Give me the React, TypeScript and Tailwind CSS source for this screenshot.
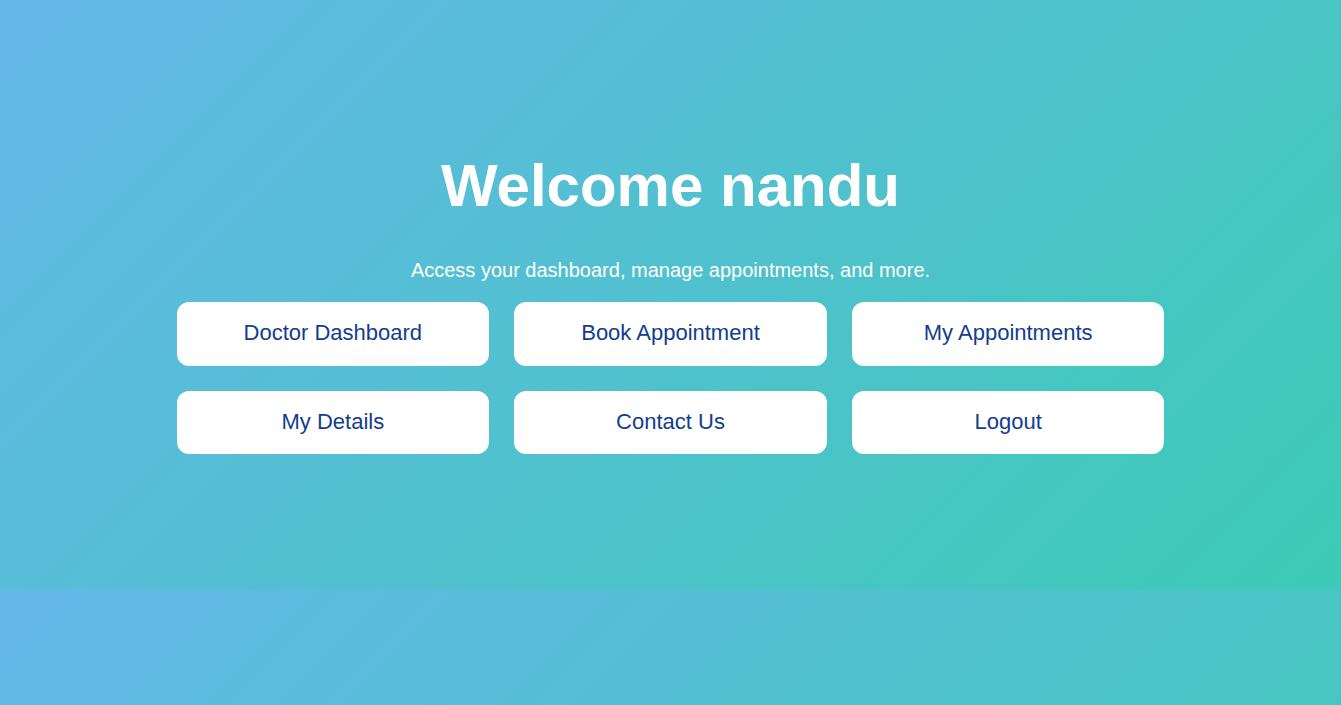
const links = [
  "Doctor Dashboard",
  "Book Appointment",
  "My Appointments",
  "My Details",
  "Contact Us",
  "Logout",
];

export default function App() {
  return (
    <div className="h-[705px] w-full overflow-hidden font-['Liberation_Sans',Arial,sans-serif]">
      {/* Hero */}
      <section className="flex h-[589px] flex-col items-center bg-[linear-gradient(135deg,#64b7e8,#3ccbb5)] pt-[151px] text-white">
        <h1 className="text-[60px] font-bold leading-[69px]">Welcome nandu</h1>
        <p className="mt-[39px] text-[20px] leading-[23px]">
          Access your dashboard, manage appointments, and more.
        </p>
        <div className="mt-[20px] grid w-[988px] grid-cols-3 gap-[25px]">
          {links.map((label) => (
            <button
              key={label}
              className="flex h-[63.5px] items-center justify-center rounded-xl bg-white pb-[2px] text-[22px] text-[#123d8f]"
            >
              {label}
            </button>
          ))}
        </div>
      </section>
      {/* background repeats below the hero */}
      <div className="h-[589px] bg-[linear-gradient(135deg,#64b7e8,#3ccbb5)]" />
    </div>
  );
}
